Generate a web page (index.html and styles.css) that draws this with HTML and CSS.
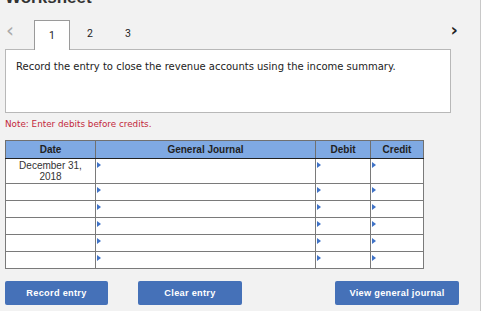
FILE: index.html
```html
<!DOCTYPE html>
<html lang="en">
<head>
  <meta charset="UTF-8">
  <title>Worksheet</title>
  <link rel="stylesheet" href="styles.css">
</head>
<body>
  <div class="panel">
    <h1 class="title">Worksheet</h1>
    <div class="tab-bar">
      <span class="arrow prev">&lsaquo;</span>
      <div class="tabs">
        <span class="tab active">1</span>
        <span class="tab">2</span>
        <span class="tab">3</span>
      </div>
      <span class="arrow next">&rsaquo;</span>
    </div>
    <div class="question">
      Record the entry to close the revenue accounts using the income summary.
    </div>
    <p class="note">Note: Enter debits before credits.</p>

    <table class="journal">
      <tr>
        <th class="col-date">Date</th>
        <th class="col-desc">General Journal</th>
        <th class="col-amt">Debit</th>
        <th class="col-amt2">Credit</th>
      </tr>
      <tr class="first">
        <td class="date">December 31,<br>2018</td>
        <td><span class="mark"></span></td>
        <td><span class="mark"></span></td>
        <td><span class="mark"></span></td>
      </tr>
      <tr>
        <td></td>
        <td><span class="mark"></span></td>
        <td><span class="mark"></span></td>
        <td><span class="mark"></span></td>
      </tr>
      <tr>
        <td></td>
        <td><span class="mark"></span></td>
        <td><span class="mark"></span></td>
        <td><span class="mark"></span></td>
      </tr>
      <tr>
        <td></td>
        <td><span class="mark"></span></td>
        <td><span class="mark"></span></td>
        <td><span class="mark"></span></td>
      </tr>
      <tr>
        <td></td>
        <td><span class="mark"></span></td>
        <td><span class="mark"></span></td>
        <td><span class="mark"></span></td>
      </tr>
      <tr>
        <td></td>
        <td><span class="mark"></span></td>
        <td><span class="mark"></span></td>
        <td><span class="mark"></span></td>
      </tr>
    </table>

    <div class="actions">
      <button class="btn record">Record entry</button>
      <button class="btn clear">Clear entry</button>
      <button class="btn view">View general journal</button>
    </div>
  </div>
</body>
</html>
```

FILE: styles.css
```css
html, body {
  margin: 0;
  background: #fff;
  overflow: hidden;
}
.panel {
  width: 481px;
  height: 323px;
  background: #f2f2f2;
  border-right: 1px solid #c8c8c8;
  padding: 0 0 0 5px;
  box-sizing: border-box;
  font-family: "DejaVu Sans", Verdana, sans-serif;
  color: #222;
}
.title {
  font-family: "Liberation Sans", Arial, sans-serif;
  font-size: 17px;
  font-weight: bold;
  margin: -12px 0 0 0;
  height: 19px;
  line-height: 19px;
  color: #333;
}
.tab-bar {
  display: flex;
  align-items: flex-end;
  height: 30px;
  width: 453px;
  margin-top: 12px;
}
.arrow {
  font-family: "DejaVu Sans", sans-serif;
  font-size: 20px;
  line-height: 22px;
  align-self: flex-start;
}
.prev { color: #aaa; width: 28px; padding-left: 1px; }
.next { color: #222; margin-left: auto; font-weight: bold; font-size: 18px; }
.tabs {
  display: flex;
  gap: 2px;
}
.tab {
  width: 36px;
  height: 30px;
  line-height: 30px;
  text-align: center;
  font-family: Roboto, "Liberation Sans", sans-serif;
  font-size: 10.5px;
  color: #222;
  box-sizing: border-box;
}
.tab.active {
  background: #fff;
  border: 1px solid #9a9a9a;
  border-bottom: none;
  position: relative;
  top: 1px;
}
.question {
  width: 446px;
  height: 64px;
  box-sizing: border-box;
  background: #fff;
  border: 1px solid #b8b8b8;
  padding: 11px 10px;
  font-size: 10px;
  line-height: 12px;
}
.note {
  margin: 6px 0 0 0;
  font-size: 8.8px;
  color: #c3283b;
  height: 14px;
}
.journal {
  margin-top: 7px;
  border-collapse: collapse;
  width: 419px;
  background: #fff;
  font-family: "Liberation Sans", Arial, sans-serif;
}
.journal th {
  background: #7fa9e3;
  font-size: 10px;
  font-weight: bold;
  color: #222;
  height: 17px;
  padding: 0;
  border: 1px solid #707070;
  border-bottom: 1px solid #222;
}
.journal td {
  border: 1px solid #7a7a7a;
  height: 16px;
  padding: 0;
  vertical-align: top;
}
.journal tr.first td { height: 23px; }
.col-date { width: 89px; }
.col-desc { width: 219px; }
.col-amt { width: 54px; }
.journal td.date {
  text-align: center;
  font-size: 10px;
  line-height: 11px;
  color: #333;
  padding-top: 1px;
}
.mark {
  display: block;
  width: 0;
  height: 0;
  margin: 3px 0 0 1px;
  border-top: 3px solid transparent;
  border-bottom: 3px solid transparent;
  border-left: 4px solid #3f72c6;
}
.actions {
  display: flex;
  margin-top: 12px;
  width: 454px;
}
.btn {
  height: 24px;
  background: #4571b8;
  color: #fff;
  border: none;
  border-radius: 2px;
  font-family: "Liberation Sans", Arial, sans-serif;
  font-weight: bold;
  font-size: 9.2px;
  letter-spacing: 0.3px;
  padding: 0;
}
.record { width: 103px; }
.clear { width: 104px; margin-left: 30px; }
.view { width: 124px; margin-left: auto; }
```
